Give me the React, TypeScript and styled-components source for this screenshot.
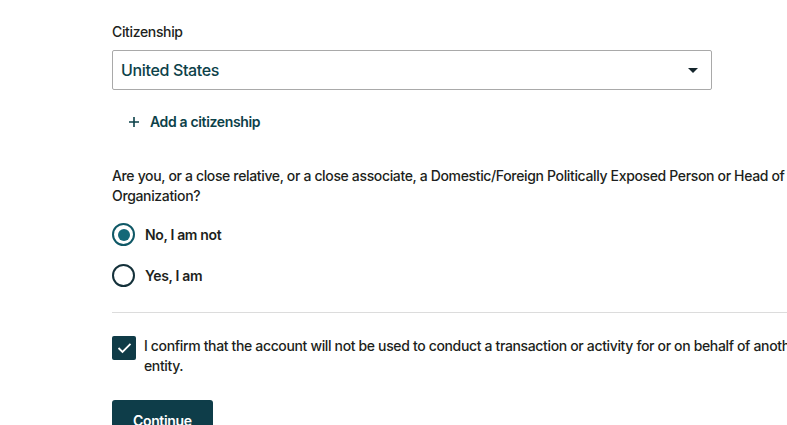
import styled, { createGlobalStyle } from 'styled-components';

const GlobalStyle = createGlobalStyle`
  html, body {
    margin: 0;
    padding: 0;
    overflow: hidden;
    background: #ffffff;
  }
  body {
    font-family: Inter, 'Noto Sans', 'Liberation Sans', sans-serif;
    color: #1d1f20;
    letter-spacing: -0.35px;
  }
`;

const Page = styled.div`
  width: 800px;
  padding: 22px 0 0 112px;
`;

const Label = styled.div`
  font-size: 14px;
  line-height: 20px;
  font-weight: 500;
`;

const Select = styled.div`
  box-sizing: border-box;
  width: 600px;
  height: 40px;
  margin-top: 8px;
  border: 1px solid #a9a9a9;
  border-radius: 2px;
  display: flex;
  align-items: center;
  justify-content: space-between;
  padding: 0 12px 0 8px;
  font-size: 16px;
  font-weight: 500;
  color: #0c4149;
`;

const Caret = styled.span`
  width: 0;
  height: 0;
  border-left: 5px solid transparent;
  border-right: 5px solid transparent;
  border-top: 5px solid #14252c;
  margin-right: 1px;
`;

const AddLink = styled.button`
  display: flex;
  align-items: center;
  gap: 10px;
  margin-top: 22px;
  padding: 0 0 0 16px;
  border: none;
  background: none;
  font-family: inherit;
  letter-spacing: inherit;
  font-size: 14px;
  line-height: 20px;
  font-weight: 600;
  color: #0c4149;
`;

const Question = styled.p`
  margin: 34px 0 0;
  font-size: 14px;
  line-height: 20px;
  font-weight: 500;
`;

const RadioGroup = styled.div`
  display: flex;
  flex-direction: column;
  gap: 18px;
  margin-top: 17px;
`;

const RadioRow = styled.label`
  display: flex;
  align-items: center;
  gap: 10px;
  font-size: 14px;
  line-height: 22px;
  font-weight: 600;
`;

const RadioCircle = styled.span<{ checked?: boolean }>`
  box-sizing: border-box;
  width: 23px;
  height: 23px;
  border-radius: 50%;
  border: 2px solid ${p => (p.checked ? '#0f5866' : '#14313a')};
  display: flex;
  align-items: center;
  justify-content: center;
  &::after {
    content: '';
    display: ${p => (p.checked ? 'block' : 'none')};
    width: 12px;
    height: 12px;
    border-radius: 50%;
    background: #146878;
  }
`;

const Divider = styled.hr`
  margin: 25px 0 0;
  border: none;
  border-top: 1px solid #dcdcdc;
`;

const ConfirmRow = styled.label`
  display: flex;
  align-items: flex-start;
  gap: 8px;
  margin-top: 23px;
  font-size: 14px;
  line-height: 20px;
  font-weight: 500;
`;

const CheckBox = styled.span`
  flex: none;
  width: 24px;
  height: 24px;
  border-radius: 2px;
  background: #0f3b47;
  display: flex;
  align-items: center;
  justify-content: center;
`;

const ContinueButton = styled.button`
  margin-top: 24px;
  height: 40px;
  padding: 0 21px;
  border: none;
  border-radius: 3px;
  background: #0e3d49;
  color: #ffffff;
  font-family: inherit;
  letter-spacing: inherit;
  font-size: 14px;
  font-weight: 600;
`;

const App = () => {
  return (
    <>
      <GlobalStyle />
      <Page>
        <Label>Citizenship</Label>
        <Select>
          <span>United States</span>
          <Caret />
        </Select>
        <AddLink>
          <svg width="12" height="12" viewBox="0 0 12 12">
            <path d="M6 1v10M1 6h10" stroke="#0c4149" strokeWidth="1.6" />
          </svg>
          Add a citizenship
        </AddLink>
        <Question>
          Are you, or a close relative, or a close associate, a Domestic/Foreign Politically
          Exposed Person or Head of an International Organization?
        </Question>
        <RadioGroup>
          <RadioRow>
            <RadioCircle checked />
            No, I am not
          </RadioRow>
          <RadioRow>
            <RadioCircle />
            Yes, I am
          </RadioRow>
        </RadioGroup>
        <Divider />
        <ConfirmRow>
          <CheckBox>
            <svg width="15" height="12" viewBox="0 0 15 12">
              <path d="M1.5 6l4 4L13.5 1.8" fill="none" stroke="#fff" strokeWidth="1.8" />
            </svg>
          </CheckBox>
          <span>
            I confirm that the account will not be used to conduct a transaction or activity for
            or on behalf of another individual or entity.
          </span>
        </ConfirmRow>
        <ContinueButton>Continue</ContinueButton>
      </Page>
    </>
  );
};

export default App;
